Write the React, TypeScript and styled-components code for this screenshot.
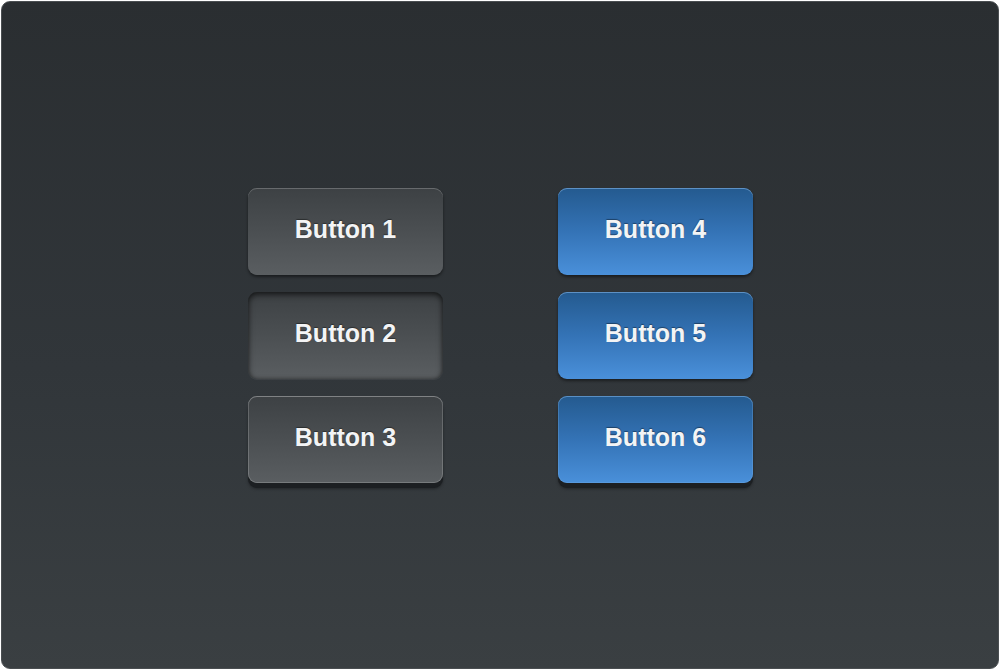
import React from "react";
import styled, { createGlobalStyle, css } from "styled-components";

const Global = createGlobalStyle`
  html, body { margin: 0; padding: 0; background: #ffffff; }
  body { width: 1000px; height: 670px; overflow: hidden; }
`;

const Panel = styled.div`
  box-sizing: border-box;
  margin: 1px;
  width: 998px;
  height: 668px;
  border-radius: 9px;
  border: 1px solid #4a4e51;
  background: linear-gradient(180deg, #2a2e31 0%, #31363a 55%, #3a3f42 100%);
  display: flex;
  align-items: center;
  justify-content: center;
`;

const Grid = styled.div`
  display: grid;
  grid-template-columns: 195px 195px;
  grid-auto-rows: 87px;
  column-gap: 115px;
  row-gap: 17px;
  margin-left: 1px;
`;

type Variant = "raised" | "pressed" | "edged";

const grayBg = "linear-gradient(180deg, #3d4144 0%, #4b4f52 50%, #5a5e61 100%)";
const blueBg = "linear-gradient(180deg, #245a8f 0%, #3473b6 50%, #4a90da 100%)";

const Btn = styled.button<{ $blue?: boolean; $variant: Variant }>`
  box-sizing: border-box;
  width: 195px;
  height: 87px;
  border: none;
  border-radius: 9px;
  padding: 0 0 3px;
  font-family: "Liberation Sans", Arial, Helvetica, sans-serif;
  font-weight: bold;
  font-size: 25px;
  color: #f3f4f5;
  text-shadow: 0 -1px 1px rgba(0, 0, 0, 0.4);
  background: ${(p) => (p.$blue ? blueBg : grayBg)};
  cursor: pointer;

  ${(p) =>
    p.$variant === "raised" &&
    css`
      box-shadow: inset 0 1px 0 ${p.$blue ? "rgba(140,190,240,0.55)" : "rgba(255,255,255,0.22)"},
        0 2px 3px rgba(0, 0, 0, 0.45);
    `}

  ${(p) =>
    p.$variant === "pressed" &&
    css`
      box-shadow: inset 0 3px 6px rgba(0, 0, 0, 0.55),
        inset 0 0 4px rgba(0, 0, 0, 0.35),
        0 1px 0 rgba(255, 255, 255, 0.06);
    `}

  ${(p) =>
    p.$variant === "edged" &&
    css`
      box-shadow: inset 0 0 0 1px ${p.$blue ? "rgba(120,175,230,0.3)" : "rgba(255,255,255,0.18)"},
        inset 0 1px 0 ${p.$blue ? "rgba(140,190,240,0.4)" : "rgba(255,255,255,0.2)"},
        0 5px 0 #1c1f22, 0 6px 3px rgba(0, 0, 0, 0.35);
    `}
`;

const items: { label: string; blue: boolean; variant: Variant }[] = [
  { label: "Button 1", blue: false, variant: "raised" },
  { label: "Button 4", blue: true, variant: "raised" },
  { label: "Button 2", blue: false, variant: "pressed" },
  { label: "Button 5", blue: true, variant: "raised" },
  { label: "Button 3", blue: false, variant: "edged" },
  { label: "Button 6", blue: true, variant: "edged" },
];

export default function App() {
  return (
    <>
      <Global />
      <Panel>
        <Grid>
          {items.map((it) => (
            <Btn key={it.label} $blue={it.blue} $variant={it.variant}>
              {it.label}
            </Btn>
          ))}
        </Grid>
      </Panel>
    </>
  );
}
